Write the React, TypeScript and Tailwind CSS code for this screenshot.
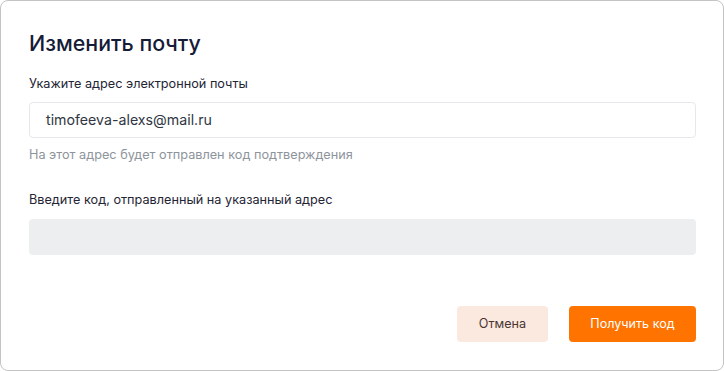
export default function App() {
  return (
    <div className="h-[371px] w-[724px] bg-white font-['Inter',sans-serif]">
      <div className="flex h-[371px] w-[724px] flex-col rounded-lg border border-[#c4c4c4] bg-white pl-[28px] pr-[27px] pt-[26px]">
        <h1 className="text-[21.4px] font-medium leading-[32px] text-[#161b38]">
          Изменить почту
        </h1>

        <label className="mt-[16px] text-[12.7px] leading-[18px] text-[#1f2535]">
          Укажите адрес электронной почты
        </label>
        <div className="mt-[9px] flex h-[36px] items-center rounded-[4px] border border-[#e6e8eb] bg-white px-[16px] text-[14.2px] text-[#303642]">
          timofeeva-alexs@mail.ru
        </div>
        <p className="mt-[8px] text-[12.7px] leading-[18px] text-[#8e949c]">
          На этот адрес будет отправлен код подтверждения
        </p>

        <label className="mt-[27px] text-[12.7px] leading-[18px] text-[#1f2535]">
          Введите код, отправленный на указанный адрес
        </label>
        <div className="mt-[10px] h-[36px] rounded-[4px] bg-[#eceef0]" />

        <div className="mt-[51px] flex justify-end gap-[21px]">
          <button className="h-[36px] w-[91px] rounded-[4px] bg-[#fbe9e0] text-[12.6px] text-[#4a3530]">
            Отмена
          </button>
          <button className="h-[36px] w-[127px] rounded-[4px] bg-[#ff7300] text-[12.6px] text-white">
            Получить код
          </button>
        </div>
      </div>
    </div>
  );
}
